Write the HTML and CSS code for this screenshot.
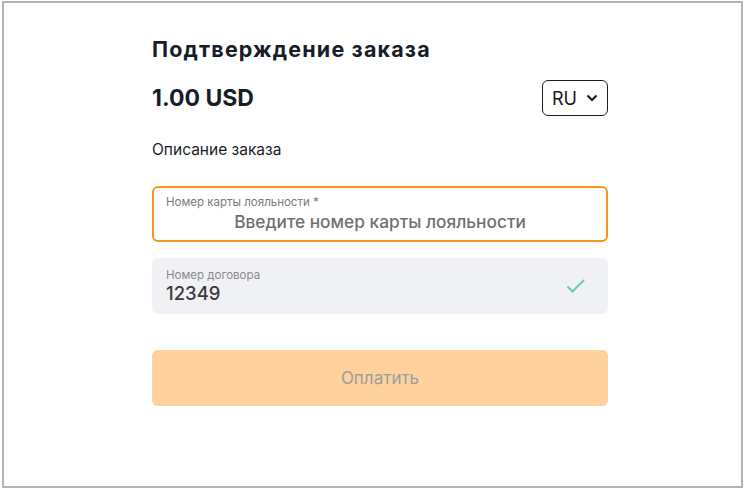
FILE: index.html
```html
<!DOCTYPE html>
<html lang="ru">
<head>
<meta charset="utf-8">
<link rel="stylesheet" href="styles.css">
</head>
<body>
<div class="frame">
  <div class="col">
    <h1 class="title">Подтверждение заказа</h1>
    <div class="amount-row">
      <div class="amount">1.00 USD</div>
      <div class="lang">RU
        <svg class="chev" width="12" height="8" viewBox="0 0 12 8"><path d="M1.5 1.5 L6 6 L10.5 1.5" fill="none" stroke="#1a1a1a" stroke-width="2"/></svg>
      </div>
    </div>
    <div class="desc">Описание заказа</div>
    <div class="field field-active">
      <div class="label">Номер карты лояльности *</div>
      <div class="placeholder">Введите номер карты лояльности</div>
    </div>
    <div class="field field-filled">
      <div class="field-body">
        <div class="label">Номер договора</div>
        <div class="value">12349</div>
      </div>
      <svg class="check" width="20" height="16" viewBox="0 0 20 16"><path d="M1.5 8.5 L6.5 13.5 L18 2" fill="none" stroke="#6fcf9f" stroke-width="2"/></svg>
    </div>
    <button class="pay">Оплатить</button>
  </div>
</div>
</body>
</html>
```
FILE: styles.css
```css
* { box-sizing: border-box; }
html, body { margin: 0; padding: 0; background: #fff; }
body { font-family: "Inter", "Noto Sans", sans-serif; color: #1b2230; }
.frame {
  width: 741px;
  height: 487px;
  margin: 1px 0 0 2px;
  border: 2px solid #b4b4b4;
  background: #fff;
}
.col {
  width: 456px;
  margin-left: 148px;
  padding-top: 32px;
}
.title {
  margin: 0;
  font-size: 21.5px;
  line-height: 28px;
  font-weight: 700;
  letter-spacing: 1.15px;
  color: #161d29;
}
.amount-row {
  display: flex;
  justify-content: space-between;
  align-items: center;
  margin-top: 17px;
}
.amount {
  font-size: 23px;
  line-height: 28px;
  font-weight: 700;
  color: #161d29;
}
.lang {
  width: 66px;
  height: 36px;
  border: 1px solid #1e1e1e;
  border-radius: 6px;
  display: flex;
  align-items: center;
  gap: 9px;
  padding-left: 9px;
  font-size: 18px;
  color: #1a1a1a;
}
.desc {
  margin-top: 24px;
  font-size: 15.5px;
  line-height: 20px;
  color: #161d29;
}
.field {
  height: 56px;
  border-radius: 6px;
  margin-top: 26px;
}
.field-active {
  border: 2px solid #f7941d;
  padding: 7px 12px 0 12px;
}
.label {
  font-size: 11.5px;
  line-height: 14px;
  color: #7a7a7a;
}
.placeholder {
  font-size: 17.3px;
  line-height: 22px;
  margin-top: 2px;
  text-align: center;
  color: #707070;
  font-weight: 500;
}
.field-filled {
  margin-top: 16px;
  background: #f0f1f4;
  display: flex;
  align-items: center;
  justify-content: space-between;
  padding: 0 22px 0 14px;
}
.field-filled .label { color: #8a8a8a; }
.value {
  font-size: 18.5px;
  line-height: 22px;
  color: #3b3b3b;
  font-weight: 500;
}
.pay {
  display: block;
  width: 100%;
  height: 56px;
  margin-top: 36px;
  border: none;
  border-radius: 6px;
  background: #fed19d;
  color: #9c9c9c;
  font-family: inherit;
  font-size: 17px;
  padding: 0;
}
```
